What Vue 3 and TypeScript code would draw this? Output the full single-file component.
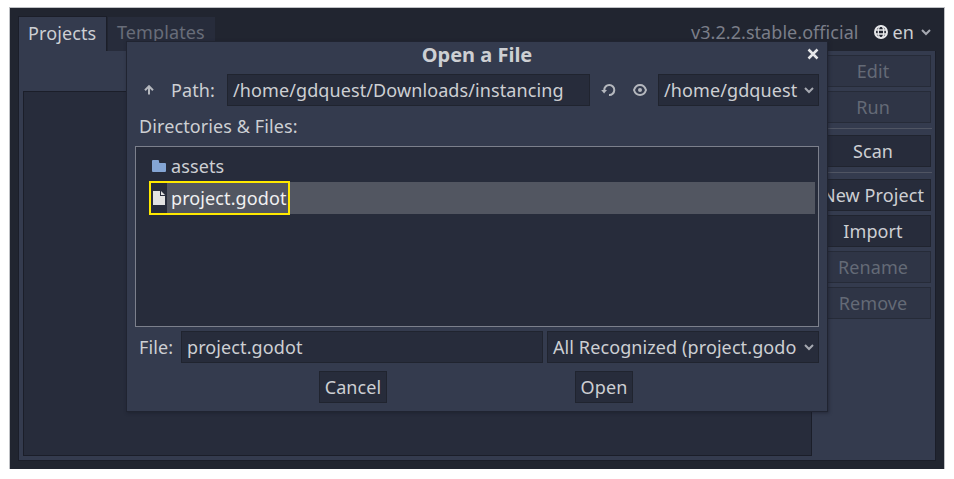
<script setup lang="ts">
import { ref } from 'vue'

interface SideAction { label: string; disabled?: boolean; divider?: boolean }

const actions: SideAction[] = [
  { label: 'Edit', disabled: true },
  { label: 'Run', disabled: true, divider: true },
  { label: 'Scan', divider: true },
  { label: 'New Project' },
  { label: 'Import' },
  { label: 'Rename', disabled: true },
  { label: 'Remove', disabled: true },
]
const path = ref('/home/gdquest/Downloads/instancing')
const fileName = ref('project.godot')
</script>

<template>
  <main class="window">
    <header class="topbar">
      <div class="tab active"><span>Projects</span></div>
      <div class="tab"><span>Templates</span></div>
      <span class="version">v3.2.2.stable.official</span>
      <svg class="globe" width="14" height="14" viewBox="0 0 14 14" fill="none" stroke="#e6e7e9">
        <circle cx="7" cy="7" r="6" stroke-width="2" />
        <ellipse cx="7" cy="7" rx="2.7" ry="6" stroke-width="1.3" />
        <path d="M1 5h12M1 9h12" stroke-width="1.3" />
      </svg>
      <span class="lang">en</span>
      <svg class="chev" width="10" height="7" viewBox="0 0 10 7"><path d="M1 1l4 4 4-4" /></svg>
    </header>
    <section class="panel">
      <div class="projects"></div>
      <nav class="side">
        <template v-for="a in actions" :key="a.label">
          <button class="btn" :disabled="a.disabled"><span>{{ a.label }}</span></button>
          <i v-if="a.divider" class="divider"></i>
        </template>
      </nav>
    </section>

    <section class="dialog">
      <div class="title">
        <span>Open a File</span>
        <svg class="close" width="12" height="12" viewBox="0 0 12 12"><path d="M1.500 1.500l9 9m0-9l-9 9" /></svg>
      </div>
      <div class="row path-row">
        <svg class="up" width="10" height="10" viewBox="0 0 10 10"><path d="M5 9.500V1.500M1 5.200l4-4 4 4" /></svg>
        <span class="path-label">Path:</span>
        <div class="field path">{{ path }}</div>
        <svg class="reload" width="16" height="14" viewBox="0 0 16 14">
          <path d="M4.300 7.200A5 5 0 1 1 9 12" fill="none" stroke="#b5b8be" stroke-width="2" />
          <path d="M1.200 7H7L4.100 10.400z" fill="#b5b8be" />
        </svg>
        <svg class="eye" width="14" height="12" viewBox="0 0 14 12">
          <path d="M7 1C3.800 1 1.800 3.500 1 6c.8 2.500 2.800 5 6 5s5.200-2.500 6-5C12.200 3.500 10.200 1 7 1z" fill="none" stroke="#b5b8be" stroke-width="2" />
          <circle cx="7" cy="6" r="2" fill="#b5b8be" />
        </svg>
        <div class="field drive">
          <span>/home/gdquest</span>
          <svg class="chev" width="10" height="7" viewBox="0 0 10 7"><path d="M1 1l4 4 4-4" /></svg>
        </div>
      </div>
      <div class="caption">Directories &amp; Files:</div>
      <div class="files">
        <div class="entry">
          <svg width="14" height="12" viewBox="0 0 14 12"><path d="M0 1Q0 0 1 0H6Q7 0 7 1V2Q7 3 8 3H13Q14 3 14 4V11Q14 12 13 12H1Q0 12 0 11z" fill="#84a5d4" /></svg>
          <span>assets</span>
        </div>
        <div class="entry selected">
          <div class="marked">
            <svg width="12" height="14" viewBox="0 0 12 14"><path d="M0 0H7V5H12V14H0zM8 0L12 4H8z" fill="#e2e2e2" /></svg>
            <span>project.godot</span>
          </div>
        </div>
      </div>
      <div class="row file-row">
        <span class="file-label">File:</span>
        <div class="field file">{{ fileName }}</div>
        <div class="field filter">
          <span>All Recognized (project.godo</span>
          <svg class="chev" width="10" height="7" viewBox="0 0 10 7"><path d="M1 1l4 4 4-4" /></svg>
        </div>
      </div>
      <div class="row buttons">
        <button class="btn cancel">Cancel</button>
        <button class="btn open">Open</button>
      </div>
    </section>
  </main>
</template>

<style>
body { background: #fff; overflow: hidden; }
</style>

<style scoped>
* { box-sizing: border-box; }
.window {
  position: relative;
  width: 934px;
  height: 461px;
  margin: 8px 0 0 10px;
  padding: 8px;
  background: #212530;
  box-shadow: 0 0 0 1px #bfc1c5;
  font-family: "Noto Sans", sans-serif;
  font-size: 18px;
  letter-spacing: 0.1px;
  line-height: 32px;
  color: #cdcfd3;
  white-space: nowrap;
}
.topbar { display: flex; height: 35px; align-items: flex-start; }
.tab { width: 107px; height: 34px; margin: 1px 0 0 1px; padding-left: 9px; background: #272c3b; color: #686c79; line-height: 31px; }
.tab.active { position: relative; width: 89px; height: 35px; margin: 0; padding: 0 0 0 9px; background: #343b4e; color: #cdcfd3; border: 1px solid #1b1e29; border-bottom: 0; z-index: 1; line-height: 32px; }
.version { margin: 0 0 0 auto; color: #7b7e89; letter-spacing: 0.05px; }
.globe { margin: 9px 0 0 15px; }
.lang { margin: 0 0 0 5px; }
.topbar .chev { margin: 13px 5px 0 7px; }
.chev { flex: none; }
.chev path { fill: none; stroke: #a6a9b1; stroke-width: 2; }
.panel { display: flex; gap: 3px; width: 918px; height: 410px; padding: 4px; background: #343b4e; border: 1px solid #1b1e29; border-top: 0; }
.projects { width: 789px; height: 365px; margin-top: 36px; background: #272c3b; border: 1px solid #1b1e29; }
.side { display: flex; flex-direction: column; gap: 4px; width: 116px; }
.btn { height: 32px; padding: 0; font: inherit; letter-spacing: inherit; line-height: 30px; color: #cdcfd3; background: #272c3b; border: 1px solid #20242f; }
.side .btn { width: 116px; }
.btn:disabled { color: #646a76; background: #2f3546; border-color: #262b38; }
.divider { height: 1px; margin: 1px -1px 2px 1px; background: #505563; }

.dialog { position: absolute; left: 117px; top: 34px; width: 700px; height: 369px; padding: 0 8px; background: #343b4e; box-shadow: 0 0 0 1px #202431, 1px 1px 3px 1px rgba(24, 27, 38, .55); }
.title { display: flex; justify-content: center; height: 32px; line-height: 26px; font-size: 20px; font-weight: 700; letter-spacing: 0; position: relative; }
.close { position: absolute; right: 0; top: 6px; }
.close path { stroke: #e6e7e9; stroke-width: 2.500; }
.row { display: flex; align-items: center; height: 32px; }
.field { height: 32px; padding: 0 5px; line-height: 30px; background: #272c3b; border: 1px solid #20242f; overflow: hidden; }
.up { margin-left: 9px; }
.up path { fill: none; stroke: #b5b8be; stroke-width: 2; }
.path-label { width: 56px; margin-left: 17px; }
.path { width: 363px; }
.reload { margin-left: 10px; }
.eye { margin-left: 17px; }
.drive { display: flex; align-items: center; justify-content: space-between; width: 161px; margin-left: auto; padding-right: 4px; }
.caption { padding-left: 4px; height: 40px; line-height: 40px; }
.files { height: 181px; padding: 3px; border: 1px solid #7c808c; background: #272c3b; }
.entry { display: flex; align-items: center; height: 32px; padding-left: 13px; }
.entry > span { margin-left: 5px; }
.entry.selected { padding-left: 10px; background: linear-gradient(to right, #272c3b 28px, #525661 28px); color: #f0f0f1; }
.marked { display: flex; align-items: center; width: 141px; height: 34px; padding-left: 2px; border: 2px solid #ffe900; flex: none; }
.marked span { margin-left: 6px; }
.file-row { margin-top: 4px; }
.file-label { width: 42px; margin-left: 4px; }
.file { width: 362px; }
.filter { display: flex; align-items: center; justify-content: space-between; width: 272px; margin-left: 4px; padding-right: 4px; }
.buttons { margin-top: 8px; }
.cancel { width: 68px; margin-left: 184px; }
.open { width: 58px; margin-left: 188px; }
</style>
